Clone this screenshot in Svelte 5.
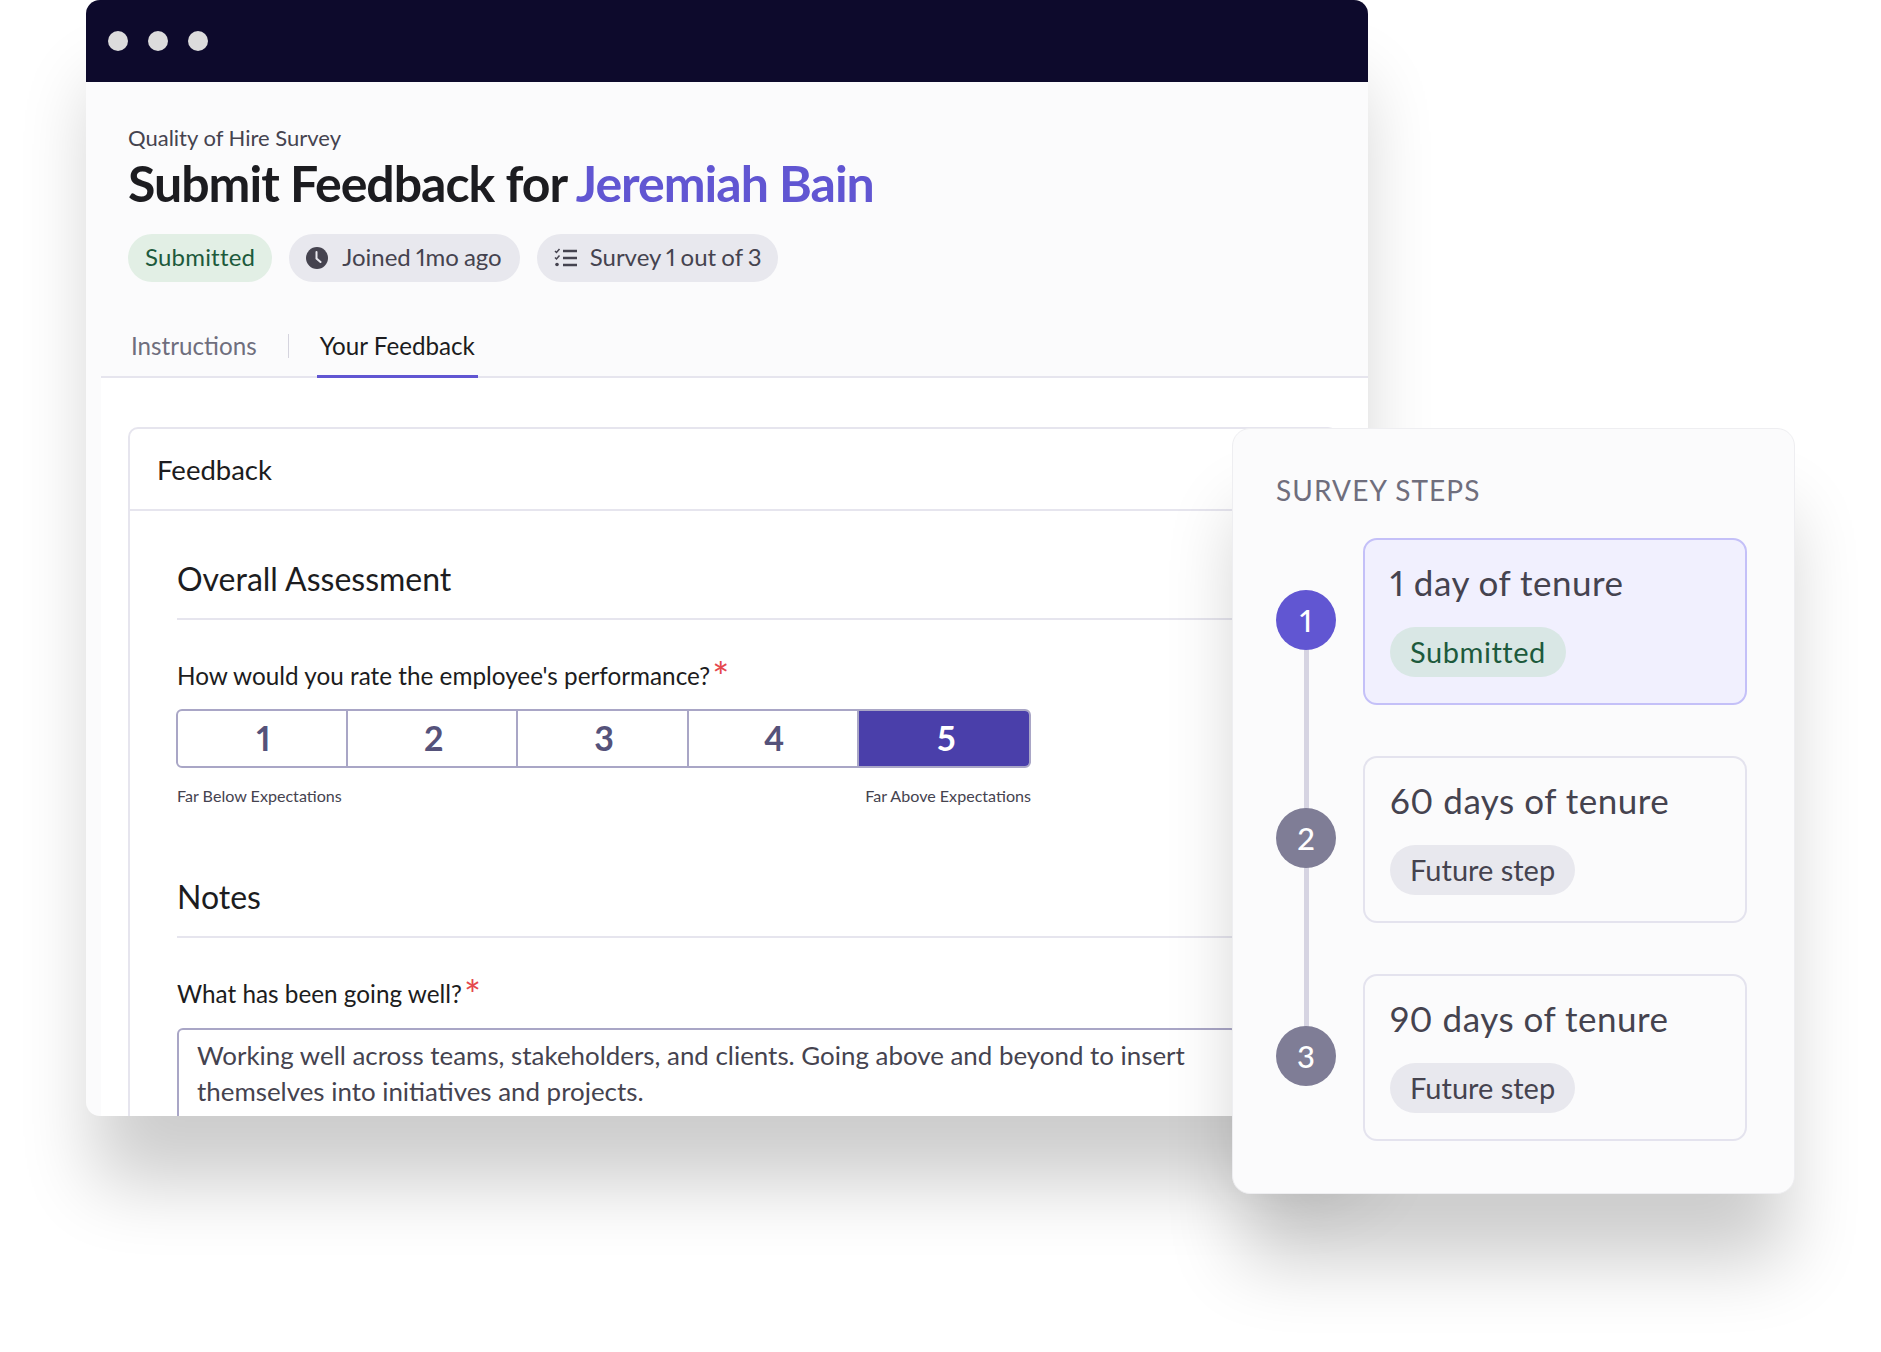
<script>
  const ratings = [1, 2, 3, 4, 5];
  const steps = [
    { n: 1, title: '1 day of tenure', status: 'Submitted', done: true },
    { n: 2, title: '60 days of tenure', status: 'Future step', done: false },
    { n: 3, title: '90 days of tenure', status: 'Future step', done: false }
  ];
</script>

<div class="stage">
  <div class="window">
    <div class="titlebar">
      <span class="dot"></span>
      <span class="dot"></span>
      <span class="dot"></span>
    </div>

    <div class="head">
      <p class="eyebrow">Quality of Hire Survey</p>
      <h1>Submit Feedback for <span class="name">Jeremiah Bain</span></h1>
      <div class="chips">
        <span class="chip green">Submitted</span>
        <span class="chip">
          <svg width="22" height="22" viewBox="0 0 22 22">
            <circle cx="11" cy="11" r="11" fill="#45434f" />
            <path d="M10.500 5v6.500l4 3.500" fill="none" stroke="#e8e8ee" stroke-width="2" stroke-linecap="round" />
          </svg>
          Joined 1mo ago
        </span>
        <span class="chip tight">
          <svg width="24" height="20" viewBox="0 0 24 20" fill="none" stroke="#45434f">
            <path d="M1 3l1.500 1.500L5.500 1M1 9.500l1.500 1.500L5.500 7.500" stroke-width="1.500" />
            <circle cx="3" cy="16.500" r="1.800" fill="#45434f" stroke="none" />
            <path d="M9 3h14M9 10h14M9 17h14" stroke-width="2.500" />
          </svg>
          Survey 1 out of 3
        </span>
      </div>
    </div>

    <nav class="tabs">
      <span class="tab">Instructions</span>
      <span class="sep"></span>
      <span class="tab active">Your Feedback</span>
    </nav>

    <div class="content">
      <div class="card">
        <div class="card-head">Feedback</div>
        <div class="card-body">
          <h2>Overall Assessment</h2>
          <div class="q">How would you rate the employee's performance?<span class="req">*</span></div>
          <div class="rating">
            {#each ratings as r}
              <div class="cell" class:on={r === 5}>{r}</div>
            {/each}
          </div>
          <div class="scale">
            <span>Far Below Expectations</span>
            <span>Far Above Expectations</span>
          </div>

          <h2 class="notes">Notes</h2>
          <div class="q">What has been going well?<span class="req">*</span></div>
          <div class="answer">Working well across teams, stakeholders, and clients. Going above and beyond to insert themselves into initiatives and projects.</div>
        </div>
      </div>
    </div>
  </div>

  <aside class="panel">
    <h3>SURVEY STEPS</h3>
    <div class="steps">
      {#each steps as s}
        <div class="step">
          <div class="num" class:current={s.done}>{s.n}</div>
          <div class="step-card" class:current={s.done}>
            <div class="step-title">{s.title}</div>
            <span class="pill" class:green={s.done}>{s.status}</span>
          </div>
        </div>
      {/each}
    </div>
  </aside>
</div>

<style>
  :global(body) {
    margin: 0;
    background: #fff;
    font-family: Lato, "Liberation Sans", sans-serif;
    font-variant-numeric: proportional-nums;
  }

  .stage {
    position: relative;
    width: 1881px;
    height: 1352px;
    overflow: hidden;
    padding-left: 86px;
    box-sizing: border-box;
  }

  .window {
    width: 1282px;
    height: 1116px;
    background: #fbfbfc;
    border-radius: 14px;
    overflow: hidden;
    box-shadow: 0 76px 74px -9px rgba(0, 0, 0, 0.2);
  }

  .titlebar {
    height: 82px;
    background: #0d0a2c;
    display: flex;
    align-items: center;
    gap: 20px;
    padding-left: 22px;
  }

  .dot {
    width: 20px;
    height: 20px;
    border-radius: 50%;
    background: #dcdcdc;
  }

  .head {
    padding: 42px 0 0 42px;
  }

  .eyebrow {
    margin: 0;
    font-size: 22px;
    line-height: 28px;
    color: #45434f;
  }

  h1 {
    margin: 1px 0 0;
    font-size: 50px;
    line-height: 60px;
    font-weight: 700;
    letter-spacing: -1px;
    color: #1c1c20;
  }

  .name {
    color: #6156d2;
  }

  .chips {
    display: flex;
    gap: 17px;
    margin-top: 21px;
  }

  .chip {
    height: 48px;
    padding: 0 18px 3px 17px;
    display: flex;
    align-items: center;
    gap: 14px;
    border-radius: 24px;
    background: #e8e8ee;
    color: #45434f;
    font-size: 24px;
    word-spacing: -1px;
    box-sizing: border-box;
  }

  .chip svg {
    margin-top: 3px;
  }

  .chip.tight {
    gap: 12px;
    padding-right: 16px;
  }

  .chip.green {
    background: #e2efe5;
    color: #1d5a3c;
    letter-spacing: 0.2px;
    padding-right: 17px;
  }

  .tabs {
    margin: 33px 0 0 15px;
    height: 61px;
    display: flex;
    align-items: center;
    border-bottom: 2px solid #e6e5ee;
  }

  .tab {
    font-size: 24.2px;
    color: #6f6e7d;
    padding: 0 3px;
    height: 61px;
    line-height: 62px;
    box-sizing: border-box;
    margin-left: 27px;
  }

  .sep {
    width: 1px;
    height: 24px;
    background: #d5d4de;
    margin: 0 28px 0 28px;
  }

  .tab.active {
    color: #1c1c20;
    margin-left: 0;
    border-bottom: 3px solid #6156d2;
    margin-bottom: -2px;
    height: 63px;
  }

  .content {
    margin-left: 15px;
    height: 800px;
    padding: 49px 0 0 27px;
    background: #fff;
    box-sizing: border-box;
  }

  .card {
    width: 1210px;
    background: #fff;
    border: 2px solid #e6e5ee;
    border-radius: 10px;
    box-sizing: border-box;
    height: 800px;
  }

  .card-head {
    height: 80px;
    line-height: 82px;
    padding-left: 27px;
    font-size: 27.5px;
    color: #1c1c20;
    border-bottom: 2px solid #e6e5ee;
  }

  .card-body {
    padding: 47px 0 0 47px;
  }

  h2 {
    margin: 0;
    font-size: 32px;
    font-weight: 400;
    line-height: 42px;
    height: 62px;
    color: #1c1c20;
    border-bottom: 2px solid #e6e5ee;
    box-sizing: border-box;
    width: 1100px;
  }

  .q {
    margin-top: 39px;
    font-size: 24.3px;
    line-height: 34px;
    color: #1c1c20;
  }

  .req {
    color: #e5484d;
    font-size: 40px;
    line-height: 0;
    margin-left: 2px;
    vertical-align: -7px;
  }

  .rating {
    margin: 16px 0 0 -1px;
    width: 855px;
    height: 59px;
    display: grid;
    grid-template-columns: repeat(5, 1fr);
    border: 2px solid #a9a6c6;
    border-radius: 6px;
    box-sizing: border-box;
    overflow: hidden;
  }

  .cell {
    display: flex;
    align-items: center;
    justify-content: center;
    padding: 0 0 2px 3px;
    font-size: 34px;
    font-weight: 700;
    color: #55527a;
    border-right: 2px solid #a9a6c6;
  }

  .cell.on {
    background: #4a3faa;
    color: #fff;
    border-right: 0;
    margin: -2px -2px -2px 0;
  }

  .scale {
    width: 854px;
    margin-top: 18px;
    display: flex;
    justify-content: space-between;
    font-size: 16.1px;
    line-height: 20px;
    color: #45434f;
  }

  h2.notes {
    margin-top: 71px;
    height: 61px;
    line-height: 40px;
  }

  .answer {
    margin-top: 17px;
    width: 1060px;
    height: 120px;
    padding: 7px 18px;
    border: 2px solid #a9a6c6;
    border-radius: 6px;
    font-size: 25.9px;
    line-height: 36px;
    color: #45434f;
    box-sizing: border-box;
  }

  .panel {
    position: absolute;
    left: 1232px;
    top: 428px;
    width: 563px;
    height: 766px;
    box-sizing: border-box;
    padding: 43px 47px 0 43px;
    background: #fbfbfc;
    border: 1px solid #eeeef1;
    border-radius: 18px;
    box-shadow: 0 76px 74px -9px rgba(0, 0, 0, 0.2);
  }

  h3 {
    margin: 0;
    font-size: 28px;
    line-height: 36px;
    font-weight: 400;
    letter-spacing: 1.1px;
    color: #6f6e7d;
  }

  .steps {
    position: relative;
    margin-top: 30px;
    display: flex;
    flex-direction: column;
    gap: 51px;
  }

  .steps::before {
    content: '';
    position: absolute;
    left: 28px;
    top: 83px;
    height: 436px;
    width: 5px;
    background: #d6d4e2;
  }

  .step {
    display: flex;
    align-items: center;
    gap: 27px;
    position: relative;
  }

  .num {
    width: 60px;
    height: 60px;
    margin-top: -3px;
    border-radius: 50%;
    background: #7f7d96;
    color: #fff;
    font-size: 31px;
    font-weight: 500;
    display: flex;
    align-items: center;
    justify-content: center;
  }

  .num.current {
    background: #6156d2;
  }

  .step-card {
    flex: 1;
    height: 167px;
    box-sizing: border-box;
    padding: 19px 25px 0;
    border: 2px solid #e4e3ee;
    border-radius: 14px;
  }

  .step-card.current {
    background: #f1f0fe;
    border-color: #c4c0f8;
  }

  .step-title {
    font-size: 35px;
    letter-spacing: 0.5px;
    line-height: 46px;
    color: #45434f;
  }

  .pill {
    display: inline-block;
    margin-top: 22px;
    height: 50px;
    line-height: 50px;
    padding: 0 20px;
    border-radius: 25px;
    background: #e8e8ee;
    color: #45434f;
    font-size: 29px;
  }

  .pill.green {
    background: #d9e7e5;
    color: #1d5a3c;
    letter-spacing: 0.55px;
  }
</style>
